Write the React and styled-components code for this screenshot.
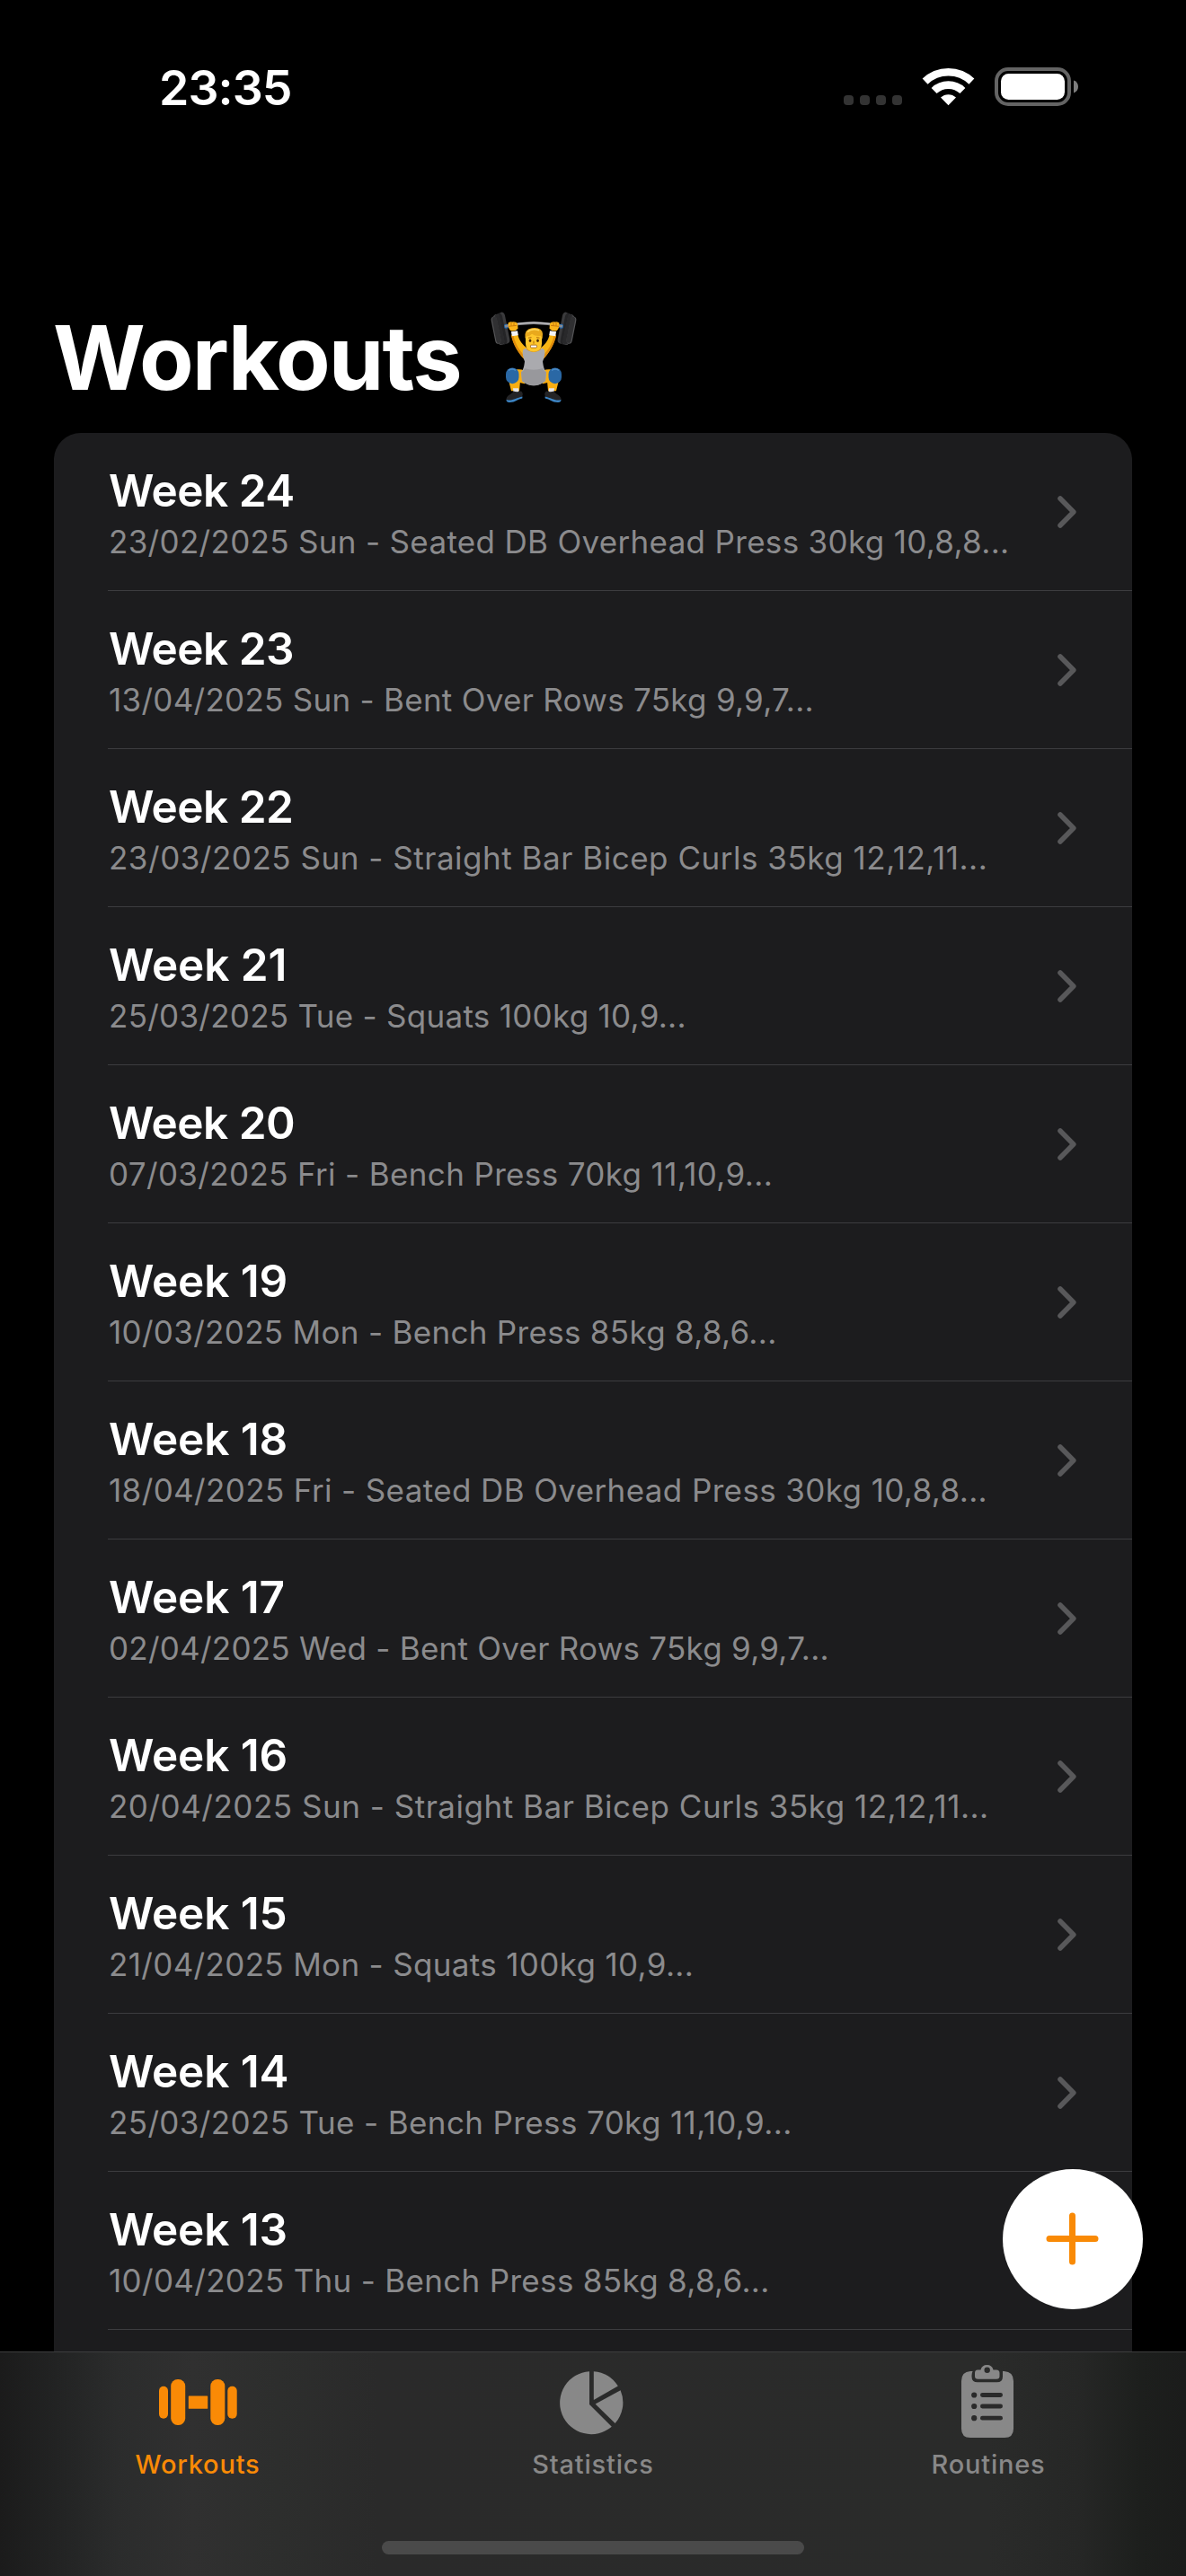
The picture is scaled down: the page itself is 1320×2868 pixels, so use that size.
import React from "react";
import styled, { createGlobalStyle } from "styled-components";

const Global = createGlobalStyle`
  * { box-sizing: border-box; }
  body { margin: 0; background: #000; font-family: Inter, "Liberation Sans", sans-serif; }
`;

const Screen = styled.div`
  position: relative;
  width: 1320px;
  height: 2868px;
  display: flex;
  flex-direction: column;
  background: #000;
  overflow: hidden;
`;

const StatusBar = styled.header`
  flex: none;
  height: 196px;
  padding: 0 120px 0 177px;
  display: flex;
  justify-content: space-between;
  align-items: flex-start;
`;

const Clock = styled.div`
  margin-top: 65px;
  font-size: 53.5px;
  line-height: 65px;
  font-weight: 600;
  letter-spacing: -0.9px;
  color: #fff;
`;

const Indicators = styled.div`
  margin-top: 74px;
  display: flex;
  align-items: flex-start;
`;

const Title = styled.h1`
  flex: none;
  margin: 0;
  height: 286px;
  padding: 138px 0 0 59px;
  display: flex;
  align-items: flex-start;
  gap: 33px;
  font-size: 99px;
  line-height: 128px;
  font-weight: 700;
  letter-spacing: -1.9px;
  color: #fff;
`;

const TitleText = styled.span`
  display: block;
`;

const Emoji = styled.svg`
  flex: none;
  display: block;
  margin-top: 13px;
`;

const List = styled.main`
  flex: 1;
  min-height: 0;
  margin: 0 60px;
  background: #1c1c1e;
  border-radius: 30px 30px 0 0;
  overflow: hidden;
`;

const Row = styled.div`
  height: 176px;
  margin-left: 60px;
  padding: 0 62px 0 1px;
  display: flex;
  align-items: center;
  justify-content: space-between;
  border-bottom: 1px solid #3c3c3f;
`;

const RowText = styled.div`
  padding-top: 6px;
  display: flex;
  flex-direction: column;
  white-space: nowrap;
`;

const RowTitle = styled.div`
  font-size: 49.5px;
  line-height: 60px;
  font-weight: 600;
  letter-spacing: ${(p) => p.$tracking}px;
  color: #fff;
`;

const RowDetail = styled.div`
  font-size: 35px;
  line-height: 54px;
  letter-spacing: ${(p) => p.$tracking}px;
  color: #8b8b8d;
`;

const Fab = styled.button`
  position: absolute;
  left: 1116px;
  top: 2415px;
  width: 156px;
  height: 156px;
  padding: 0;
  border: 0;
  border-radius: 50%;
  background: #fff;
  display: grid;
  place-items: center;
`;

const TabBar = styled.footer`
  flex: none;
  height: 250px;
  border-top: 1px solid #3d3d3e;
  background: linear-gradient(90deg, #1b1b1b 0, #232424 70px, #2b2c2c 130px, #303030 215px, #2d2e2d 310px, #2a2a2a 420px, #2a2b2a 1100px, #262726 1200px, #1d1f1d 1270px, #1b1c1b 1320px);
  display: flex;
  flex-direction: column;
  align-items: center;
  justify-content: space-between;
  padding-bottom: 24px;
`;

const Tabs = styled.nav`
  width: 100%;
  display: grid;
  grid-template-columns: repeat(3, 440px);
`;

const Tab = styled.div`
  display: flex;
  flex-direction: column;
  align-items: center;
  color: ${(p) => (p.$active ? "#f98a06" : "#888888")};
`;

const TabIcon = styled.svg`
  display: block;
  fill: currentColor;
`;

const TabLabel = styled.span`
  font-size: 29px;
  line-height: 36px;
  font-weight: 500;
  letter-spacing: 0.8px;
`;

const HomeIndicator = styled.div`
  width: 470px;
  height: 15px;
  border-radius: 8px;
  background: #4a4a4a;
`;

const workouts = [
  { week: 24, tracking: 0.32, detail: "23/02/2025 Sun - Seated DB Overhead Press 30kg 10,8,8..." },
  { week: 23, tracking: 0.28, detail: "13/04/2025 Sun - Bent Over Rows 75kg 9,9,7..." },
  { week: 22, tracking: 0.52, detail: "23/03/2025 Sun - Straight Bar Bicep Curls 35kg 12,12,11..." },
  { week: 21, tracking: 0.28, detail: "25/03/2025 Tue - Squats 100kg 10,9..." },
  { week: 20, tracking: 0.36, detail: "07/03/2025 Fri - Bench Press 70kg 11,10,9..." },
  { week: 19, tracking: 0.31, detail: "10/03/2025 Mon - Bench Press 85kg 8,8,6..." },
  { week: 18, tracking: 0.38, detail: "18/04/2025 Fri - Seated DB Overhead Press 30kg 10,8,8..." },
  { week: 17, tracking: 0.25, detail: "02/04/2025 Wed - Bent Over Rows 75kg 9,9,7..." },
  { week: 16, tracking: 0.52, detail: "20/04/2025 Sun - Straight Bar Bicep Curls 35kg 12,12,11..." },
  { week: 15, tracking: 0.34, detail: "21/04/2025 Mon - Squats 100kg 10,9..." },
  { week: 14, tracking: 0.38, detail: "25/03/2025 Tue - Bench Press 70kg 11,10,9..." },
  { week: 13, tracking: 0.32, detail: "10/04/2025 Thu - Bench Press 85kg 8,8,6..." },
];

// A narrow "1" leaves the heading tight, so those weeks get looser tracking.
const titleTracking = (week) => (String(week).includes("1") ? -0.1 : -0.5);

const Indicator = () => (
  <svg width="262" height="46" viewBox="936 74 262 46">
    <g fill="#333">
      {[937, 955, 973, 991].map((x) => (
        <rect key={x} x={x} y="106" width="11" height="11" rx="4" />
      ))}
    </g>
    <g fill="none" stroke="#fff" strokeWidth="8.6">
      <path d="M1027.6 90.6A37.5 37.5 0 0 1 1079.4 90.6" />
      <path d="M1037.6 101A23 23 0 0 1 1069.4 101" />
    </g>
    <path d="M1045 108.6A12.5 12.5 0 0 1 1062 108.6L1053.5 117.2Z" fill="#fff" />
    <rect x="1107" y="77" width="81" height="39" rx="13" fill="none" stroke="#646464" strokeWidth="4" />
    <rect x="1112" y="82" width="71" height="29" rx="8.5" fill="#fff" />
    <path d="M1193 89.6C1196.4 90.6 1198 93.4 1198 96.5S1196.4 102.4 1193 103.4Z" fill="#7d7d7d" />
  </svg>
);

const Plates = ({ flip }) => (
  <g transform={flip ? "translate(96 0) scale(-1 1)" : undefined}>
    <g transform="translate(2.4 2) scale(0.78 0.98) rotate(-14 9 18)">
      <rect x="12" y="0" width="9" height="37" rx="4.5" fill="#3a3a3c" />
      <rect x="8" y="0" width="9" height="37" rx="4.5" fill="#242426" />
      <rect x="4" y="0.5" width="9" height="36" rx="4.5" fill="#48484a" />
      <rect x="5.5" y="1" width="8" height="35" rx="4" fill="#29292b" />
      <rect x="0.5" y="2" width="8" height="32" rx="4" fill="#555557" />
      <rect x="2" y="2.5" width="7" height="31" rx="3.5" fill="#303032" />
    </g>
    <rect x="15" y="14" width="5" height="5" rx="2" fill="#1863ad" />
  </g>
);

const Limbs = ({ flip }) => (
  <g transform={flip ? "translate(96 0) scale(-1 1)" : undefined}>
    <path d="M23 26L30 25C32 33 36 38 41 41L38 54C31 47 25 36 23 26Z" fill="#f9b514" />
    <path d="M23 27C25 37 31 47 38 54L38.5 50C32 44 27 35 25.5 27Z" fill="#e08c0b" />
    <path d="M22.8 22.5L30 21.5L30.8 26.5L24 27.5Z" fill="#f4f4f6" />
    <path d="M19.5 13Q20.5 11 24 11.5Q28.5 11 30 13.5L30.5 19Q28 22.5 22.5 21.5Q19.5 20 19.5 13Z" fill="#fab31a" />
    <path d="M20 16.5L29 15.5M23 12V16M26 12V16" stroke="#c97708" strokeWidth="0.9" fill="none" />
    <path d="M29 65Q38 64 40 70L38 81L29 79Z" fill="#f9ae12" />
    <path d="M20 77L33 78L32 89L23 89Z" fill="#f9ae12" />
    <rect x="17" y="63" width="14.5" height="18" rx="7.2" fill="#2a68a5" />
    <path d="M20 66Q24 63 28 66" stroke="#4a8bc8" strokeWidth="1.5" fill="none" />
    <path d="M25 86L31 86L31.5 91L25.5 91Z" fill="#e6e6ea" />
    <path d="M17.5 98C19 93 24 93 25.5 89.5Q29 91 34 89.5Q37 92 35 95.5C31 97 28 101 21 101Q17 101 17.5 98Z" fill="#242426" />
    <path d="M17.5 99C24 101 28 97 35.5 95.5L35.3 97.5C30 98.5 28 102 21 102Q17.5 102 17.5 99Z" fill="#3d86c6" />
  </g>
);

const Lifter = () => (
  <Emoji width="96" height="101" viewBox="0 0 96 102" preserveAspectRatio="none" overflow="visible" role="img" aria-label="Weightlifter">
    <Plates />
    <Plates flip />
    <path d="M16 16.5Q48 9 80 16.5" fill="none" stroke="#8c8c90" strokeWidth="3" />
    <path d="M30 13.5Q48 10.5 66 13.5" fill="none" stroke="#d4d4d8" strokeWidth="1" />
    <Limbs />
    <Limbs flip />
    <path d="M40 38H56V43Q48 52 40 43Z" fill="#e29a10" />
    <path d="M39 41Q41 45 48 45.5Q55 45 57 41L60 43Q61 49 58 56Q59 65 62 68L61 78Q55 83 48 83Q41 83 35 78L34 68Q37 65 38 56Q35 49 36 43Z" fill="#aaaaae" />
    <path d="M38 64Q48 67 58 64Q59 67 62 68L61 78Q55 83 48 83Q41 83 35 78L34 68Q37 67 38 64Z" fill="#98989c" />
    <path d="M39 28Q39 20 48 20Q57 20 57 28V36Q57 44 48 45Q39 44 39 36Z" fill="#ffc72c" />
    <path d="M38.5 30Q37 20 46 18.5Q57 17 58 25L57.6 31L56 27Q50 28 46 25Q43 28 40.5 27.5Z" fill="#e9a91d" />
    <path d="M41 23Q46 18 54 21" fill="none" stroke="#ffd85a" strokeWidth="1.5" />
    <ellipse cx="44" cy="32.5" rx="1.3" ry="1.8" fill="#4c2c09" />
    <ellipse cx="52.5" cy="32.5" rx="1.3" ry="1.8" fill="#4c2c09" />
    <path d="M42 29.5L45.5 29M51 29L54.5 29.5M48 33V36" stroke="#a96508" strokeWidth="1" />
    <rect x="44.5" y="37.5" width="7" height="3" rx="1" fill="#fff" stroke="#8c4a08" strokeWidth="0.7" />
  </Emoji>
);

const Chevron = () => (
  <svg width="21" height="36" viewBox="0 0 21 36">
    <path d="M3 3L17.8 18L3 33" fill="none" stroke="#58585a" strokeWidth="5.6" strokeLinecap="round" strokeLinejoin="round" />
  </svg>
);

const DumbbellIcon = () => (
  <TabIcon width="90" height="107" viewBox="175 2619 90 107">
    <rect x="177" y="2656.7" width="10" height="36" rx="5" />
    <rect x="190.2" y="2649" width="16" height="51" rx="7.5" />
    <rect x="209.8" y="2667.5" width="21.4" height="14.2" rx="0.5" />
    <rect x="234.3" y="2649" width="16" height="51" rx="7.5" />
    <rect x="253.3" y="2656.7" width="10.4" height="36" rx="5" />
  </TabIcon>
);

const PieIcon = () => (
  <TabIcon width="74" height="107" viewBox="623 2619 74 107">
    <path d="M656 2640.2A35 35 0 1 0 680.8 2701.8L656 2677Z" />
    <path d="M660.8 2640.2A35 35 0 0 1 687.8 2656.5L660.8 2672Z" />
    <path d="M690.6 2661.2A35 35 0 0 1 684.6 2698L662.6 2676.5Z" />
  </TabIcon>
);

const ClipboardIcon = () => (
  <TabIcon width="62" height="107" viewBox="1069 2619 62 107">
    <path d="M1080 2640H1082.6Q1081.5 2642 1081.5 2645V2646Q1081.5 2652.3 1088 2652.3H1109.5Q1116 2652.3 1116 2646V2640H1117.5Q1128 2640.5 1128 2651V2704Q1128 2714 1118 2714H1080Q1070 2714 1070 2704V2651Q1070 2640.5 1080 2640Z" />
    <path fillRule="evenodd" d="M1088 2638.5H1091.5A7.2 7.2 0 0 1 1105.5 2638.5H1109Q1112.5 2638.5 1112.5 2642V2645.5Q1112.5 2648.8 1109 2648.8H1088.5Q1085 2648.8 1085 2645.5V2642Q1085 2638.5 1088 2638.5ZM1098.7 2635.5A3.2 3.2 0 1 0 1098.7 2641.9A3.2 3.2 0 1 0 1098.7 2635.5Z" />
    <g fill="#2a2a2a">
      {[2666.5, 2679, 2692.2].map((y) => (
        <React.Fragment key={y}>
          <circle cx="1084.2" cy={y} r="3.1" />
          <rect x="1091" y={y - 2.4} width="25" height="4.8" rx="2.4" />
        </React.Fragment>
      ))}
    </g>
  </TabIcon>
);

export default function App() {
  return (
    <Screen>
      <Global />
      <StatusBar>
        <Clock>23:35</Clock>
        <Indicators>
          <Indicator />
        </Indicators>
      </StatusBar>
      <Title>
        <TitleText>Workouts</TitleText>
        <Lifter />
      </Title>
      <List>
        {workouts.map((w) => (
          <Row key={w.week}>
            <RowText>
              <RowTitle $tracking={titleTracking(w.week)}>Week {w.week}</RowTitle>
              <RowDetail $tracking={w.tracking}>{w.detail}</RowDetail>
            </RowText>
            <Chevron />
          </Row>
        ))}
      </List>
      <TabBar>
        <Tabs>
          <Tab $active>
            <DumbbellIcon />
            <TabLabel>Workouts</TabLabel>
          </Tab>
          <Tab>
            <PieIcon />
            <TabLabel>Statistics</TabLabel>
          </Tab>
          <Tab>
            <ClipboardIcon />
            <TabLabel>Routines</TabLabel>
          </Tab>
        </Tabs>
        <HomeIndicator />
      </TabBar>
      <Fab aria-label="Add workout">
        <svg width="60" height="60" viewBox="0 0 60 60">
          <path d="M29.5 4V55M4 29.5H55" fill="none" stroke="#f98a06" strokeWidth="7" strokeLinecap="round" />
        </svg>
      </Fab>
    </Screen>
  );
}
